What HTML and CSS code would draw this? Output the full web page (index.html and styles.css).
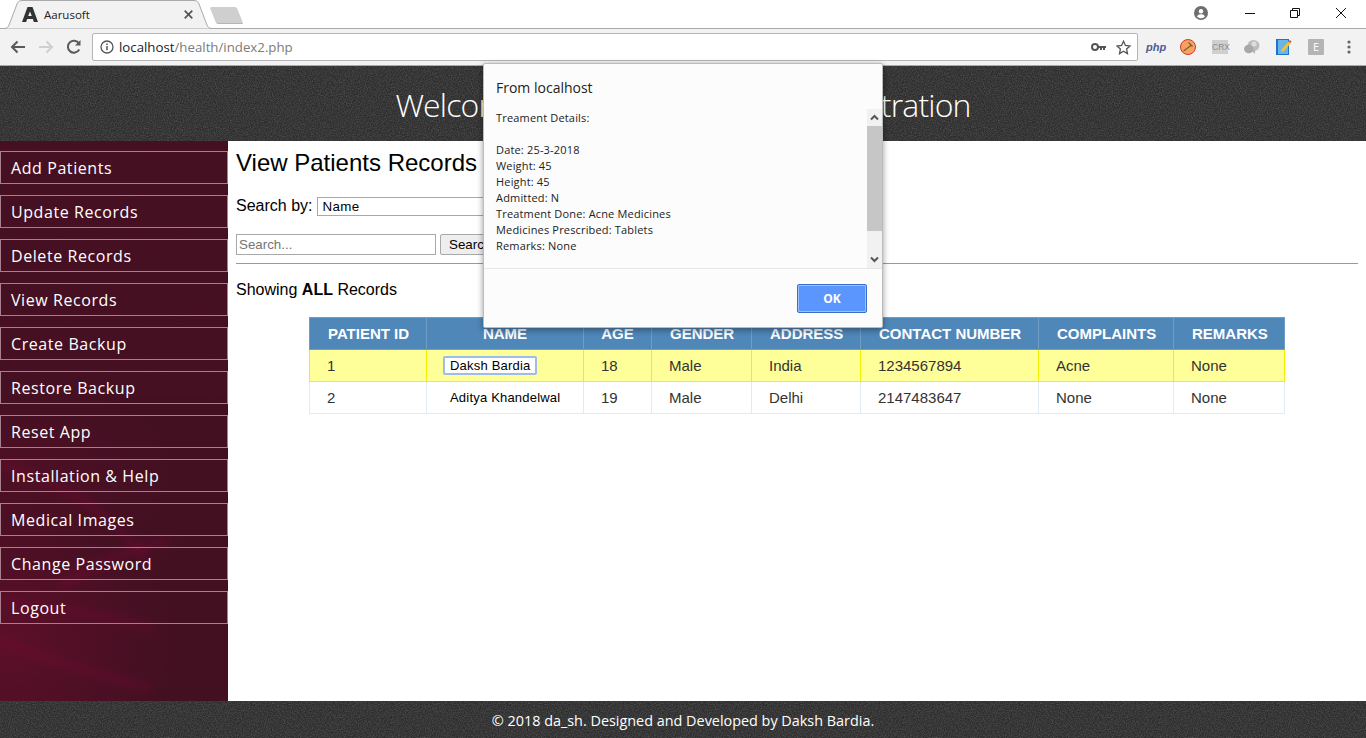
FILE: index.html
```html
<!DOCTYPE html>
<html lang="en-US">

<head>
	<meta charset="UTF-8">
	<title>Aarusoft</title>
	<link rel="stylesheet" href="styles.css">
</head>

<body>
	<div class="tabstrip">
		<div class="tab">
			<svg class="tab-shape" width="208" height="29" viewBox="0 0 208 29"><path d="M0 28.500C3 28.500 4 27 5 25L13 4C14 2 15 .5 18 .5H190C193 .5 194 2 195 4L203 25C204 27 205 28.500 208 28.500" fill="#f2f2f2" stroke="#a9a9a9"/></svg>
			<svg class="favicon" width="16" height="15" viewBox="0 0 16 15"><path d="M5.500 0h5L16 15h-4.200l-.9-3H5.100l-.9 3H0zM8 4.500L6.200 9h3.600z" fill="#333"/></svg>
			<span class="tab-title">Aarusoft</span>
			<svg class="tab-close" width="9" height="9" viewBox="0 0 9 9"><path d="M.7.7l7.600 7.600M8.300.7L.7 8.300" stroke="#555" stroke-width="1.700"/></svg>
		</div>
		<div class="newtab"></div>
		<div class="winctl">
			<svg class="profile" width="14" height="14" viewBox="0 0 14 14"><circle cx="7" cy="7" r="7" fill="#6e6e6e"/><circle cx="7" cy="5.200" r="2.200" fill="#fff"/><path d="M3 10.500c.6-1.600 2.400-2.200 4-2.200s3.400.6 4 2.200c-1 1.200-2.400 1.800-4 1.800s-3-.6-4-1.800z" fill="#fff"/></svg>
			<svg class="win-min" width="10" height="10" viewBox="0 0 10 10"><path d="M0 5.500h10" stroke="#111"/></svg>
			<svg class="win-max" width="10" height="10" viewBox="0 0 10 10"><path d="M.5 2.500h7v7h-7zM2.500 2.500v-2h7v7h-2" fill="none" stroke="#111"/></svg>
			<svg class="win-close" width="10" height="10" viewBox="0 0 10 10"><path d="M0 0l10 10M10 0L0 10" stroke="#111"/></svg>
		</div>
	</div>
	<div class="toolbar">
		<svg class="nav" width="16" height="14" viewBox="0 0 16 14"><path d="M15 7H2M7.500 1.500L2 7l5.500 5.500" fill="none" stroke="#5a5a5a" stroke-width="2"/></svg>
		<svg class="nav" width="16" height="14" viewBox="0 0 16 14"><path d="M1 7h13M8.500 1.500L14 7l-5.500 5.500" fill="none" stroke="#cfcfcf" stroke-width="2"/></svg>
		<svg class="nav" width="16" height="16" viewBox="0 0 16 16"><path d="M13.200 10.500A6 6 0 1 1 13 4.500" fill="none" stroke="#5a5a5a" stroke-width="2"/><path d="M14.500 1v5.500H9z" fill="#5a5a5a"/></svg>
		<div class="omnibox">
			<svg width="14" height="14" viewBox="0 0 14 14"><circle cx="7" cy="7" r="6" fill="none" stroke="#555" stroke-width="1.300"/><path d="M7 6v4.200M7 3.500v1.500" stroke="#555" stroke-width="1.500"/></svg>
			<span class="url"><span class="host">localhost</span>/health/index2.php</span>
			<svg class="key" width="15" height="8" viewBox="0 0 15 8"><circle cx="4" cy="4" r="3" fill="none" stroke="#555" stroke-width="2"/><path d="M7 3h8v2h-1v2h-2V5h-1v2H9V5H7z" fill="#555"/></svg>
			<svg class="star" width="15" height="15" viewBox="0 0 15 15"><path d="M7.500 1.300l1.900 4.200 4.600.5-3.400 3.100.9 4.500-4-2.300-4 2.300.9-4.500L1 6l4.600-.5z" fill="none" stroke="#555" stroke-width="1.300"/></svg>
		</div>
		<div class="exts">
			<span class="ext-php">php</span>
			<svg width="16" height="16" viewBox="0 0 16 16"><circle cx="8" cy="8" r="7.500" fill="#f4a460" stroke="#d9352a"/><path d="M3.500 12l7.500-5.500M8.500 3.500l4 4" stroke="#8a5a2a" stroke-width="1.300"/></svg>
			<span class="ext-crx">CRX</span>
			<svg width="16" height="16" viewBox="0 0 16 16"><ellipse cx="9.500" cy="6.500" rx="6" ry="5.500" fill="#bdbdbd"/><ellipse cx="4.800" cy="10" rx="4.800" ry="4.200" fill="#a8a8a8"/><circle cx="10" cy="5" r="2.500" fill="#ddd"/><path d="M8 12l3 3v-4z" fill="#b0b0b0"/></svg>
			<svg width="16" height="16" viewBox="0 0 16 16"><rect x="0" y="0" width="13" height="16" fill="#1c74c8"/><rect x="2" y="1" width="10" height="14" fill="#6ab4ea"/><path d="M5 13l1-3 7-8 2 2-7 8z" fill="#f2c230"/><path d="M12.500 2.500l2 1.500 1-1.500-1.500-1.500z" fill="#e05a3a"/></svg>
			<span class="ext-e">E</span>
			<svg class="dots" width="4" height="14" viewBox="0 0 4 14"><circle cx="2" cy="2" r="1.600" fill="#666"/><circle cx="2" cy="7" r="1.600" fill="#666"/><circle cx="2" cy="12" r="1.600" fill="#666"/></svg>
		</div>
	</div>

	<div class="page">
		<header class="banner">Welcome to Patient Record Administration</header>
		<div class="middle">
			<nav class="sidebar">
				<a href="#">Add Patients</a>
				<a href="#">Update Records</a>
				<a href="#">Delete Records</a>
				<a href="#">View Records</a>
				<a href="#">Create Backup</a>
				<a href="#">Restore Backup</a>
				<a href="#">Reset App</a>
				<a href="#">Installation &amp; Help</a>
				<a href="#">Medical Images</a>
				<a href="#">Change Password</a>
				<a href="#">Logout</a>
			</nav>
			<main class="content">
				<h2>View Patients Records</h2>
				<div class="search-by">
					<label for="field">Search by:</label>
					<select id="field" class="field-select"><option>Name</option></select>
				</div>
				<form class="search-row">
					<input class="search-box" type="text" placeholder="Search...">
					<input class="search-btn" type="submit" value="Search">
				</form>
				<hr>
				<p class="showing">Showing <b>ALL</b> Records</p>
				<table class="records">
					<thead>
						<tr>
							<th class="c-id">PATIENT ID</th>
							<th class="c-name">NAME</th>
							<th class="c-age">AGE</th>
							<th class="c-gender">GENDER</th>
							<th class="c-addr">ADDRESS</th>
							<th class="c-contact">CONTACT NUMBER</th>
							<th class="c-comp">COMPLAINTS</th>
							<th class="c-rem">REMARKS</th>
						</tr>
					</thead>
					<tbody>
						<tr class="picked">
							<td>1</td>
							<td class="name-cell"><button class="name-btn focused">Daksh Bardia</button></td>
							<td>18</td>
							<td>Male</td>
							<td>India</td>
							<td>1234567894</td>
							<td>Acne</td>
							<td>None</td>
						</tr>
						<tr>
							<td>2</td>
							<td class="name-cell"><button class="name-btn">Aditya Khandelwal</button></td>
							<td>19</td>
							<td>Male</td>
							<td>Delhi</td>
							<td>2147483647</td>
							<td>None</td>
							<td>None</td>
						</tr>
					</tbody>
				</table>
			</main>
		</div>
		<footer class="foot">© 2018 da_sh. Designed and Developed by Daksh Bardia.</footer>

		<div class="alert">
			<div class="alert-title">From localhost</div>
			<div class="alert-body">
				<div class="alert-text">Treament Details:<br><br>Date: 25-3-2018<br>Weight: 45<br>Height: 45<br>Admitted: N<br>Treatment Done: Acne Medicines<br>Medicines Prescribed: Tablets<br>Remarks: None</div>
				<div class="scrollbar">
					<svg width="15" height="17" viewBox="0 0 15 17"><path d="M4 10.500l3.500-3.500 3.500 3.500" fill="none" stroke="#555" stroke-width="2"/></svg>
					<div class="thumb"></div>
					<svg class="arrow-down" width="15" height="17" viewBox="0 0 15 17"><path d="M4 6.500l3.500 3.500 3.500-3.500" fill="none" stroke="#555" stroke-width="2"/></svg>
				</div>
			</div>
			<div class="alert-foot"><button class="ok">OK</button></div>
		</div>
	</div>
</body>

</html>
```
FILE: styles.css
```css
* {
	box-sizing: border-box;
}

html,
body {
	margin: 0;
	height: 738px;
	overflow: hidden;
	background: #fff;
	font-family: "Liberation Sans", Arial, sans-serif;
}

/* browser chrome */
.tabstrip {
	height: 29px;
	display: flex;
	background: #fff;
	border-bottom: 1px solid #a9a9a9;
}

.tab {
	width: 208px;
	height: 29px;
	margin-left: 4px;
	padding-left: 18px;
	display: flex;
	align-items: center;
	position: relative;
	flex: none;
}

.tab-shape {
	position: absolute;
	left: 0;
	top: 0;
}

.favicon,
.tab-title,
.tab-close {
	position: relative;
}

.tab-title {
	margin-left: 6px;
	font: 11.5px "Open Sans", sans-serif;
	color: #222;
}

.tab-close {
	margin-left: auto;
	margin-right: 19px;
}

.newtab {
	width: 27px;
	height: 17px;
	margin: 7px 0 0 1px;
	background: #cfcfcf;
	border-bottom: 1px solid #b5b5b5;
	border-radius: 2px;
	transform: skewX(22deg);
}

.winctl {
	margin-left: auto;
	display: flex;
	align-items: center;
	height: 26px;
}

.profile {
	margin-right: 37px;
}

.win-min {
	margin-right: 35px;
}

.win-max {
	margin-right: 36px;
}

.win-close {
	margin-right: 20px;
}

.toolbar {
	height: 37px;
	display: flex;
	align-items: center;
	padding-left: 10px;
	background: #f2f2f2;
	border-bottom: 1px solid #a9a9a9;
}

.nav {
	margin-right: 12px;
	flex: none;
}

.omnibox {
	width: 1046px;
	height: 28px;
	margin-left: -2px;
	padding: 0 6px 0 7px;
	display: flex;
	align-items: center;
	background: #fff;
	border: 1px solid #b5b5b5;
	border-radius: 2px;
}

.url {
	margin-left: 5px;
	font: 13.25px "Open Sans", sans-serif;
	color: #7b7b7b;
}

.host {
	color: #222;
}

.key {
	margin-left: auto;
}

.star {
	margin-left: 10px;
}

.exts {
	display: flex;
	align-items: center;
	padding-left: 10px;
	gap: 16px;
	color: #fff;
}

.ext-php {
	width: 16px;
	margin-left: -2px;
	margin-right: 2px;
	font: italic bold 11px "Liberation Sans", sans-serif;
	color: #4f5b93;
}

.ext-crx {
	width: 16px;
	height: 14px;
	font: 8.5px/14px "Liberation Sans", sans-serif;
	text-align: center;
	background: #cfcfcf;
	color: #8c8c8c;
}

.ext-e {
	width: 16px;
	height: 16px;
	font: 11px/16px "Open Sans", sans-serif;
	text-align: center;
	background: #b4b4b4;
	border-radius: 1px;
}

.dots {
	margin-left: 7px;
}

/* page */
.page {
	height: 672px;
	display: flex;
	flex-direction: column;
	position: relative;
}

.banner,
.foot {
	background-color: #2d2d2d;
	background-image: url("data:image/svg+xml,%3Csvg xmlns='http://www.w3.org/2000/svg' width='256' height='256'%3E%3Cfilter id='n' color-interpolation-filters='sRGB'%3E%3CfeTurbulence type='fractalNoise' baseFrequency='.85' numOctaves='2'/%3E%3CfeColorMatrix values='0 0 0 0 1 0 0 0 0 1 0 0 0 0 1 .3 0 0 0 -.1'/%3E%3C/filter%3E%3Crect width='256' height='256' filter='url(%23n)'/%3E%3C/svg%3E");
}

.banner {
	height: 75px;
	flex: none;
	text-align: center;
	padding-top: 17px;
	font: 300 32px "Open Sans", sans-serif;
	letter-spacing: -.85px;
	color: #fff;
	white-space: nowrap;
}

.middle {
	flex: 1;
	display: flex;
}

.sidebar {
	width: 228px;
	flex: none;
	padding-top: 10px;
	display: flex;
	flex-direction: column;
	gap: 11px;
	background-color: #431022;
	background-image:
		url("data:image/svg+xml,%3Csvg xmlns='http://www.w3.org/2000/svg' width='228' height='560' fill='none' stroke='%23a01840' stroke-opacity='.22'%3E%3Cfilter id='b'%3E%3CfeGaussianBlur stdDeviation='4'/%3E%3C/filter%3E%3Cg filter='url(%23b)'%3E%3Cpath d='M0 322C50 340 110 365 150 425' stroke-width='7'/%3E%3Cpath d='M60 445C90 430 115 410 170 400' stroke-width='8'/%3E%3Cpath d='M0 500C50 520 90 530 150 548' stroke-width='6'/%3E%3Cpath d='M0 460C40 470 110 470 155 490' stroke-width='6'/%3E%3C/g%3E%3C/svg%3E"),
		url("data:image/svg+xml,%3Csvg xmlns='http://www.w3.org/2000/svg' width='256' height='256'%3E%3Cfilter id='n' color-interpolation-filters='sRGB'%3E%3CfeTurbulence type='fractalNoise' baseFrequency='.8' numOctaves='2'/%3E%3CfeColorMatrix values='0 0 0 0 .45 0 0 0 0 .04 0 0 0 0 .16 .5 0 0 0 -.2'/%3E%3C/filter%3E%3Crect width='256' height='256' filter='url(%23n)'/%3E%3C/svg%3E"),
		radial-gradient(ellipse 170px 150px at 0 500px, rgba(110, 14, 46, .6), transparent),
		radial-gradient(ellipse 150px 90px at 20px 330px, rgba(100, 14, 42, .35), transparent);
	background-size: 228px 560px, 256px 256px, auto, auto;
	background-repeat: no-repeat, repeat-x, no-repeat, no-repeat;
}

.sidebar a {
	height: 33px;
	padding-left: 10px;
	font: 16px/32px "Open Sans", sans-serif;
	letter-spacing: .58px;
	color: #fff;
	text-decoration: none;
	border: 1px solid #a87f8c;
}

.content {
	flex: 1;
	padding: 8px 8px 0;
}

.content h2 {
	margin: 0;
	font-size: 24px;
	font-weight: normal;
	line-height: 28px;
	color: #000;
}

.search-by {
	margin-top: 20px;
	display: flex;
	align-items: flex-start;
	font-size: 16px;
	line-height: 18px;
}

.field-select {
	width: 200px;
	height: 19px;
	margin-left: 5px;
	font: 13.333px "Liberation Sans", sans-serif;
	letter-spacing: .4px;
	background: #fff;
	border: 1px solid #a9a9a9;
}

.search-row {
	margin-top: 18px;
	display: flex;
	gap: 4px;
}

.search-box {
	width: 200px;
	height: 21px;
	padding: 0 2px 1px;
	font: 13.333px "Liberation Sans", sans-serif;
	border: 1px solid #a9a9a9;
}

.search-btn {
	width: 62px;
	height: 21px;
	padding: 0 0 0 8px;
	text-align: left;
	font: 13.333px "Liberation Sans", sans-serif;
	background: #eee;
	border: 1px solid #a9a9a9;
	border-radius: 2px;
}

.content hr {
	margin: 8px 0 0;
	border: 0;
	border-top: 1px solid #999;
}

.showing {
	margin: 17px 0 0;
	font-size: 16px;
	line-height: 18px;
}

.records {
	width: 975px;
	margin: 18px 0 0 73px;
	border-collapse: collapse;
	table-layout: fixed;
	font-size: 15px;
}

.c-id { width: 117px; }
.c-name { width: 157px; }
.c-age { width: 68px; }
.c-gender { width: 100px; }
.c-addr { width: 109px; }
.c-contact { width: 178px; }
.c-comp { width: 135px; }
.c-rem { width: 111px; }

.records th {
	height: 32px;
	padding: 0 0 0 18px;
	text-align: left;
	font-size: 15px;
	font-weight: bold;
	color: #fff;
	background: #4f87b9;
	border: 1px solid #6f9dc6;
}

.records th.c-name,
.records th.c-age {
	text-align: center;
	padding: 0;
}

.records td {
	height: 32px;
	padding: 0 0 0 17px;
	color: #333;
	border: 1px solid #e0ebf6;
}

.records td.name-cell {
	padding-left: 16px;
}

.picked td {
	background: #ffff99;
	border-color: #f2f200;
}

.name-btn {
	height: 19px;
	padding: 0 5px;
	display: block;
	font: 13px "Liberation Sans", sans-serif;
	letter-spacing: .2px;
	color: #000;
	background: #fff;
	border: 2px solid transparent;
}

.focused {
	border-color: #9dbde8;
	border-radius: 2px;
}

.foot {
	height: 37px;
	flex: none;
	text-align: center;
	font: 14.4px/39px "Open Sans", sans-serif;
	color: #fff;
}

/* js alert box, lies over the page */
.alert {
	position: absolute;
	left: 483px;
	top: -3px;
	width: 400px;
	height: 265px;
	display: flex;
	flex-direction: column;
	background: #fcfcfc;
	border: 1px solid #bbb;
	border-radius: 2px;
	box-shadow: 0 2px 6px rgba(0, 0, 0, .4);
}

.alert-title {
	height: 45px;
	padding: 14px 0 0 12px;
	font: 14px "Open Sans", sans-serif;
	color: #222;
}

.alert-body {
	height: 160px;
	display: flex;
	justify-content: space-between;
	border-bottom: 1px solid #e6e6e6;
}

.alert-text {
	padding: 1px 0 0 12px;
	font: 11px/16px "Open Sans", sans-serif;
	letter-spacing: .17px;
	color: #222;
}

.scrollbar {
	width: 15px;
	display: flex;
	flex-direction: column;
	background: #f1f1f1;
}

.thumb {
	height: 105px;
	background: #c6c6c6;
}

.arrow-down {
	margin-top: auto;
}

.alert-foot {
	flex: 1;
	display: flex;
	justify-content: flex-end;
	padding: 15px 15px 0 0;
}

.ok {
	width: 70px;
	height: 29px;
	font: bold 12px "Open Sans", sans-serif;
	color: #fff;
	background: #5b96ff;
	border: 1px solid #3a6fc8;
	box-shadow: inset 0 0 0 1px #9dc0ff;
	border-radius: 2px;
}
```
